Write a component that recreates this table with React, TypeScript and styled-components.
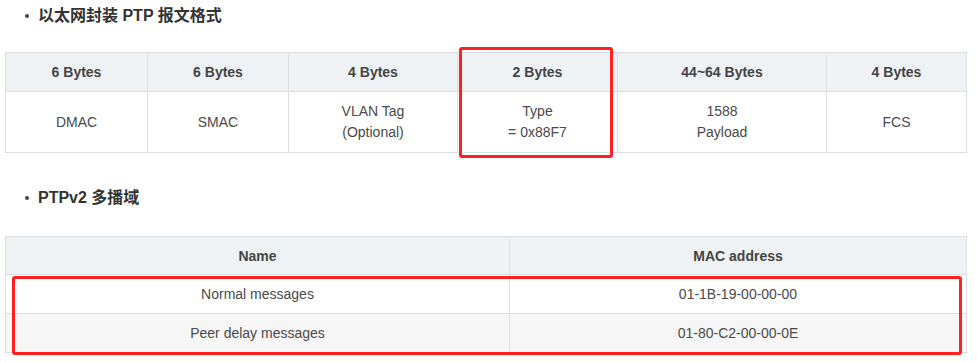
import { createGlobalStyle, styled } from "styled-components";

const GlobalStyle = createGlobalStyle`
  html, body {
    margin: 0;
    padding: 0;
    background: #fff;
  }
  body {
    font-family: "Liberation Sans", Arial, "Noto Sans CJK SC", sans-serif;
    color: #444;
  }
`;

const Page = styled.div`
  padding: 0 11px 10px 5px;
`;

const Heading = styled.h3`
  display: flex;
  align-items: center;
  height: 28px;
  margin: ${(props: { $top: number }) => props.$top}px 0 0 0;
  padding-left: 20px;
  font-size: 16px;
  font-weight: bold;
  color: #333;
  font-family: "Liberation Sans", Arial, "Noto Sans CJK SC", sans-serif;
`;

const Dot = styled.span`
  width: 4px;
  height: 4px;
  border-radius: 50%;
  background: #444;
  margin-right: 9px;
  margin-top: 4px;
`;

const TableBox = styled.div<{ $top: number }>`
  position: relative;
  margin-top: ${(props) => props.$top}px;
`;

const Table = styled.table`
  width: 961px;
  border-collapse: collapse;
  table-layout: fixed;
  font-size: 14px;
`;

const HeadCell = styled.th<{ $h: number }>`
  height: ${(props) => props.$h}px;
  padding: 0;
  border: 1px solid #dcdfe3;
  background: #eff2f5;
  color: #444;
  font-weight: bold;
  text-align: center;
`;

const Cell = styled.td<{ $h: number }>`
  height: ${(props) => props.$h}px;
  padding: 0;
  border: 1px solid #dcdfe3;
  color: #4a4a4a;
  text-align: center;
  line-height: 21px;
`;

const Row = styled.tr<{ $alt?: boolean }>`
  background: ${(props) => (props.$alt ? "#f6f6f6" : "#fff")};
`;

// red annotation frame laid over the table
const Mark = styled.div`
  position: absolute;
  border: 3px solid #ff2121;
  border-radius: 3px;
  pointer-events: none;
`;

const frame = [
  { head: "6 Bytes", body: ["DMAC"], w: 142 },
  { head: "6 Bytes", body: ["SMAC"], w: 141 },
  { head: "4 Bytes", body: ["VLAN Tag", "(Optional)"], w: 169 },
  { head: "2 Bytes", body: ["Type", "= 0x88F7"], w: 160 },
  { head: "44~64 Bytes", body: ["1588", "Payload"], w: 209 },
  { head: "4 Bytes", body: ["FCS"], w: 140 },
];

const multicast = [
  { name: "Normal messages", mac: "01-1B-19-00-00-00" },
  { name: "Peer delay messages", mac: "01-80-C2-00-00-0E" },
];

function App() {
  return (
    <Page>
      <GlobalStyle />
      <Heading $top={0}>
        <Dot />
        以太网封装 PTP 报文格式
      </Heading>
      <TableBox $top={24}>
        <Table>
          <colgroup>
            {frame.map((f, i) => (
              <col key={i} style={{ width: f.w }} />
            ))}
          </colgroup>
          <thead>
            <tr>
              {frame.map((f, i) => (
                <HeadCell key={i} $h={38}>
                  {f.head}
                </HeadCell>
              ))}
            </tr>
          </thead>
          <tbody>
            <Row>
              {frame.map((f, i) => (
                <Cell key={i} $h={60}>
                  {f.body.map((line, j) => (
                    <div key={j}>{line}</div>
                  ))}
                </Cell>
              ))}
            </Row>
          </tbody>
        </Table>
        <Mark style={{ left: 454, top: -5, width: 148, height: 105 }} />
      </TableBox>

      <Heading $top={29}>
        <Dot />
        PTPv2 多播域
      </Heading>
      <TableBox $top={26}>
        <Table>
          <colgroup>
            <col style={{ width: 504 }} />
            <col style={{ width: 457 }} />
          </colgroup>
          <thead>
            <tr>
              <HeadCell $h={37}>Name</HeadCell>
              <HeadCell $h={37}>MAC address</HeadCell>
            </tr>
          </thead>
          <tbody>
            {multicast.map((m, i) => (
              <Row key={m.mac} $alt={i % 2 === 1}>
                <Cell $h={38}>{m.name}</Cell>
                <Cell $h={38}>{m.mac}</Cell>
              </Row>
            ))}
          </tbody>
        </Table>
        <Mark style={{ left: 7, top: 40, width: 944, height: 73 }} />
      </TableBox>
    </Page>
  );
}

export default App;
